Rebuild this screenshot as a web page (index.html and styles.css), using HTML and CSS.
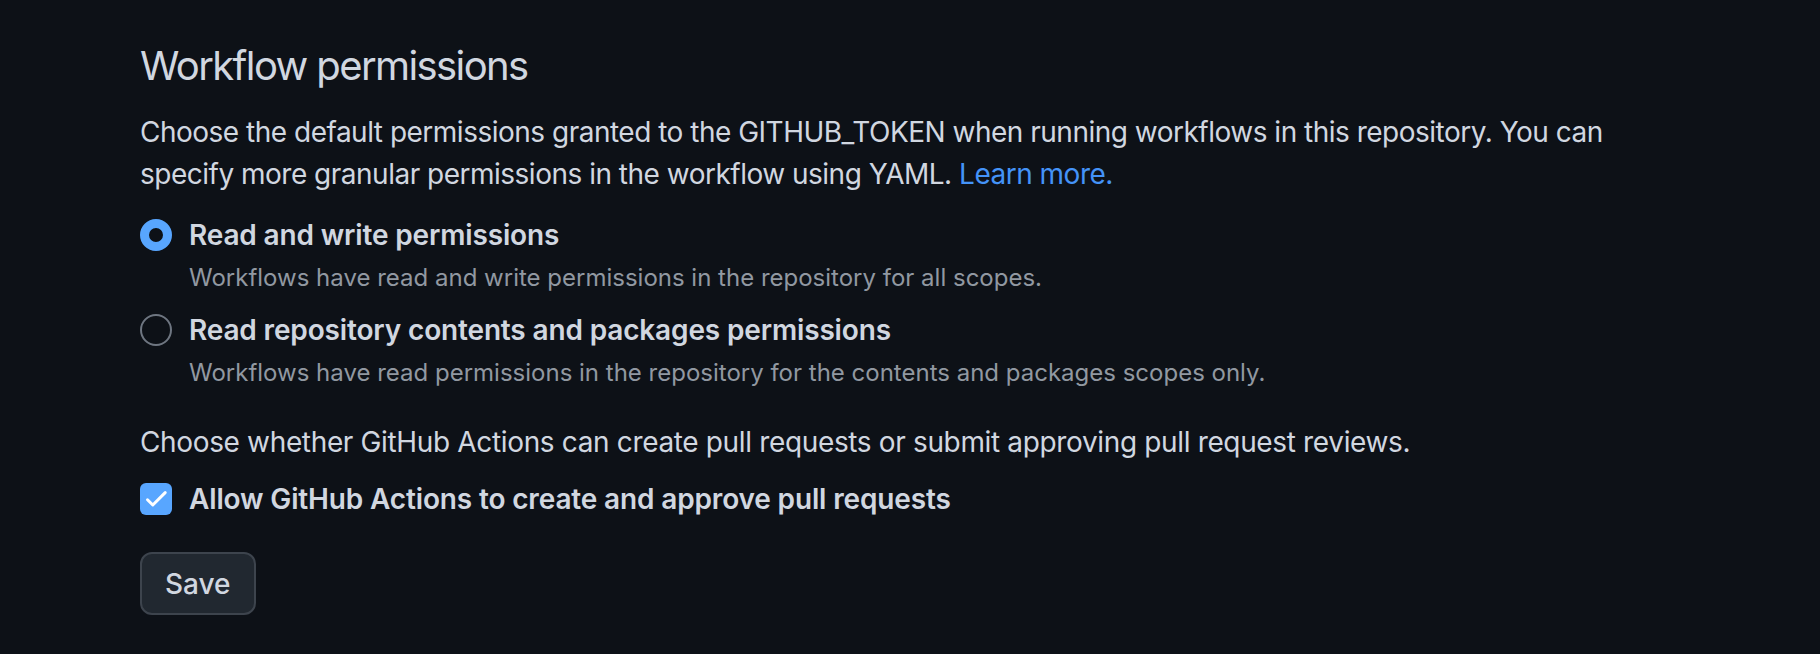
FILE: index.html
```html
<!DOCTYPE html>
<html lang="en">

    <head>
        <meta charset="UTF-8">
        <meta name="viewport" content="width=device-width, initial-scale=1.0">
        <title>Workflow permissions</title>
        <link rel="stylesheet" href="styles.css">
    </head>

    <body>
        <form class="settings">
            <h2 class="subhead">Workflow permissions</h2>

            <p class="note">
                Choose the default permissions granted to the GITHUB_TOKEN when running workflows in this repository. You can
                specify more granular permissions in the workflow using YAML. <a href="#">Learn more.</a>
            </p>

            <div class="options">
                <label class="option">
                    <span class="radio checked"></span>
                    <span class="option-text">
                        <span class="option-title">Read and write permissions</span>
                        <span class="option-desc">Workflows have read and write permissions in the repository for all scopes.</span>
                    </span>
                </label>

                <label class="option">
                    <span class="radio"></span>
                    <span class="option-text">
                        <span class="option-title">Read repository contents and packages permissions</span>
                        <span class="option-desc">Workflows have read permissions in the repository for the contents and packages scopes only.</span>
                    </span>
                </label>
            </div>

            <p class="note pr-note">Choose whether GitHub Actions can create pull requests or submit approving pull request reviews.</p>

            <label class="option check-row">
                <span class="checkbox">
                    <svg viewBox="0 0 32 32" width="32" height="32">
                        <path d="M7.5 16.8l5.3 5.2L25.2 9.6" fill="none" stroke="#ffffff" stroke-width="3" stroke-linecap="round" stroke-linejoin="round" />
                    </svg>
                </span>
                <span class="option-title">Allow GitHub Actions to create and approve pull requests</span>
            </label>

            <div class="actions">
                <button type="button" class="btn">Save</button>
            </div>
        </form>
    </body>

</html>
```

FILE: styles.css
```css
body {
    margin: 0;
    background: #0d1117;
    color: #d1d7e0;
    font-family: Inter, 'Noto Sans', sans-serif;
    min-height: 100vh;
}

.settings {
    display: flex;
    flex-direction: column;
    align-items: flex-start;
    padding: 36px 0 0 140px;
    width: 1520px;
}

.subhead {
    margin: 0;
    font-size: 40px;
    font-weight: 400;
    line-height: 60px;
    letter-spacing: -1.6px;
    color: #d1d7e0;
}

.note {
    margin: 15px 0 0;
    font-size: 28px;
    line-height: 42px;
    letter-spacing: -0.5px;
}

.note a {
    color: #4493f8;
    text-decoration: none;
}

.pr-note {
    margin-top: 30px;
    letter-spacing: -0.35px;
}

.options {
    display: flex;
    flex-direction: column;
    gap: 13px;
    margin-top: 19px;
}

.option {
    display: flex;
    align-items: flex-start;
    gap: 17px;
}

.option-text {
    display: flex;
    flex-direction: column;
    gap: 4px;
}

.option-title {
    font-size: 28px;
    line-height: 42px;
    font-weight: 600;
    letter-spacing: -0.15px;
}

.option-desc {
    font-size: 24px;
    line-height: 36px;
    color: #9198a1;
}

.radio {
    flex: none;
    width: 32px;
    height: 32px;
    margin-top: 5px;
    box-sizing: border-box;
    border: 2px solid #6e7681;
    border-radius: 50%;
}

.radio.checked {
    border: 9px solid #58a6ff;
    background: #0d1117;
}

.check-row {
    margin-top: 15px;
    align-items: center;
}

.checkbox {
    flex: none;
    width: 32px;
    height: 32px;
    border-radius: 6px;
    background: #58a6ff;
    display: flex;
    align-items: center;
    justify-content: center;
}

.actions {
    margin-top: 32px;
}

.btn {
    height: 63px;
    padding: 0 23px;
    background: #212830;
    color: #d1d7e0;
    border: 2px solid #3d444d;
    border-radius: 12px;
    font-family: inherit;
    font-size: 28px;
    font-weight: 500;
    cursor: pointer;
}
```
